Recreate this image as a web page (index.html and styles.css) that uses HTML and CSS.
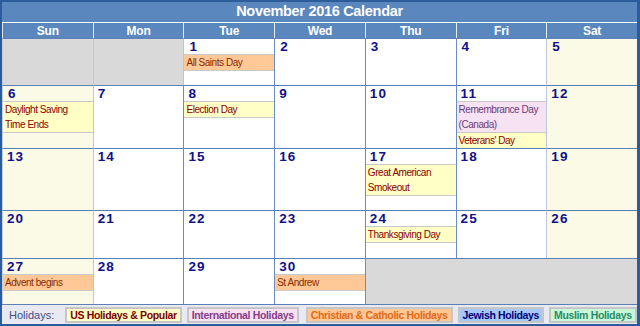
FILE: index.html
```html
<!DOCTYPE html>
<html>
<head>
<meta charset="utf-8">
<link rel="stylesheet" href="styles.css">
</head>
<body>
<div class="cal">
  <div class="title">November 2016 Calendar</div>
  <div class="grid">
    <div class="hd first">Sun</div>
    <div class="hd">Mon</div>
    <div class="hd">Tue</div>
    <div class="hd">Wed</div>
    <div class="hd">Thu</div>
    <div class="hd">Fri</div>
    <div class="hd">Sat</div>

    <div class="cell empty first"></div>
    <div class="cell empty lt"></div>
    <div class="cell lt"><div class="num n1">1</div><div class="ev chr last">All Saints Day</div></div>
    <div class="cell"><div class="num n1">2</div></div>
    <div class="cell"><div class="num n1">3</div></div>
    <div class="cell"><div class="num n1">4</div></div>
    <div class="cell we lt"><div class="num n1">5</div></div>

    <div class="cell we first"><div class="num n1">6</div><div class="ev us last">Daylight Saving<br>Time Ends</div></div>
    <div class="cell lt"><div class="num">7</div></div>
    <div class="cell"><div class="num">8</div><div class="ev us last">Election Day</div></div>
    <div class="cell"><div class="num">9</div></div>
    <div class="cell"><div class="num">10</div></div>
    <div class="cell"><div class="num">11</div><div class="ev intl">Remembrance Day<br>(Canada)</div><div class="ev us">Veterans' Day</div></div>
    <div class="cell we lt"><div class="num">12</div></div>

    <div class="cell we first"><div class="num">13</div></div>
    <div class="cell lt"><div class="num">14</div></div>
    <div class="cell"><div class="num">15</div></div>
    <div class="cell"><div class="num">16</div></div>
    <div class="cell"><div class="num">17</div><div class="ev us last">Great American<br>Smokeout</div></div>
    <div class="cell"><div class="num">18</div></div>
    <div class="cell we lt"><div class="num">19</div></div>

    <div class="cell we first"><div class="num">20</div></div>
    <div class="cell lt"><div class="num">21</div></div>
    <div class="cell"><div class="num">22</div></div>
    <div class="cell"><div class="num">23</div></div>
    <div class="cell"><div class="num">24</div><div class="ev us last">Thanksgiving Day</div></div>
    <div class="cell"><div class="num">25</div></div>
    <div class="cell we lt"><div class="num">26</div></div>

    <div class="cell we first"><div class="num">27</div><div class="ev chr last">Advent begins</div></div>
    <div class="cell lt"><div class="num">28</div></div>
    <div class="cell"><div class="num">29</div></div>
    <div class="cell"><div class="num">30</div><div class="ev chr last">St Andrew</div></div>
    <div class="cell empty span3"></div>
  </div>
  <div class="legend">
    <span class="lg-label">Holidays:</span>
    <span class="lg lg-us">US Holidays &amp; Popular</span>
    <span class="lg lg-intl">International Holidays</span>
    <span class="lg lg-chr">Christian &amp; Catholic Holidays</span>
    <span class="lg lg-jew">Jewish Holidays</span>
    <span class="lg lg-mus">Muslim Holidays</span>
  </div>
</div>
</body>
</html>
```

FILE: styles.css
```css
html, body {
  margin: 0;
  padding: 0;
  background: #ffffff;
}
.cal {
  width: 640px;
  height: 326px;
  box-sizing: border-box;
  border: 2px solid #2d5c9a;
  border-right-width: 3px;
  background: #5b87bf;
  font-family: "Liberation Sans", Arial, sans-serif;
  display: flex;
  flex-direction: column;
}
.title {
  height: 20px;
  line-height: 19px;
  text-align: center;
  color: #ffffff;
  font-weight: bold;
  font-size: 14.5px;
  letter-spacing: -0.3px;
}
.grid {
  display: grid;
  grid-template-columns: repeat(7, 1fr);
  grid-template-rows: 16px 47px 63px 62px 48px 46px;
}
.hd {
  box-sizing: border-box;
  border-top: 1px solid #ffffff;
  border-left: 1px solid #e6ecf6;
  color: #ffffff;
  font-weight: bold;
  font-size: 12px;
  letter-spacing: -0.2px;
  line-height: 16px;
  text-align: center;
  background: #5b87bf;
}
.hd.first {
  border-left-color: #dfe6f2;
}
.cell {
  box-sizing: border-box;
  border-top: 1px solid #5b80b6;
  border-left: 1px solid #6a8cc0;
  background: #ffffff;
  overflow: hidden;
}
.cell.first {
  border-left: 1px solid #c4cfe2;
}
.cell.lt {
  border-left-color: #b9c6dc;
}
.cell.we {
  background: #fbfae6;
}
.cell.empty {
  background: #d9d9d9;
}
.cell.span3 {
  grid-column: span 3;
}
.num {
  height: 15px;
  line-height: 16px;
  padding-left: 4px;
  color: #10108a;
  font-weight: bold;
  font-size: 13.5px;
  letter-spacing: 1.1px;
}
.num.n1 {
  padding-left: 5px;
}
.ev {
  border-top: 1px solid #c9c9c9;
  line-height: 15px;
  padding-left: 2px;
  font-family: "Liberation Sans", Arial, sans-serif;
  font-size: 10px;
  letter-spacing: -0.45px;
  white-space: nowrap;
}
.ev.last {
  border-bottom: 1px solid #c9c9c9;
}
.ev.us {
  background: #ffffc6;
  color: #8b0000;
}
.ev.chr {
  background: #ffc896;
  color: #8b2a00;
}
.ev.intl {
  background: #f6e2f2;
  color: #6a3a7a;
}
.legend {
  flex: 1;
  box-sizing: border-box;
  border-top: 1px solid #5b80b6;
  background: #e9e9f1;
  display: flex;
  align-items: center;
  padding-left: 7px;
  gap: 5px;
}
.lg-label {
  color: #3a4c8c;
  font-size: 11px;
  margin-right: 6px;
}
.lg {
  box-sizing: border-box;
  height: 16px;
  line-height: 12px;
  border: 2px solid #c6c6c6;
  padding: 0 3px;
  font-weight: bold;
  font-size: 10.5px;
  letter-spacing: -0.35px;
  white-space: nowrap;
}
.lg-intl { margin-right: 2px; }
.lg-us { background: #ffffc6; color: #7a0000; }
.lg-intl { background: #f6e2f2; color: #8a3a8a; }
.lg-chr { background: #ffc896; color: #e06a1a; }
.lg-jew { background: #a6c8f6; color: #00007a; }
.lg-mus { background: #c8f8d8; color: #2a8a6a; }
```
